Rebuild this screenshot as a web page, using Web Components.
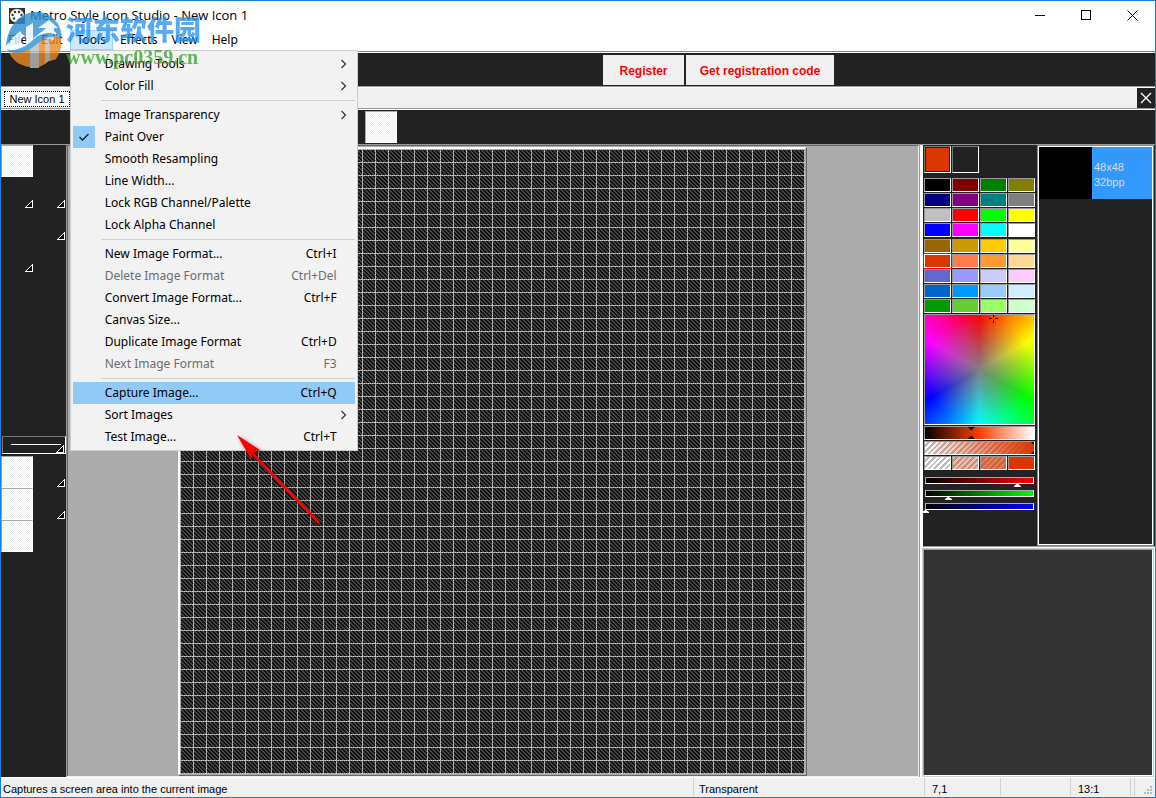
<!DOCTYPE html>
<html lang="en">
<head>
<meta charset="utf-8">
<title>Metro Style Icon Studio - New Icon 1</title>
<style>
html, body { height: 100%; margin: 0; }
body { font-family: "Liberation Sans", Arial, sans-serif; font-size: 11px; }
</style>
</head>
<body>
<studio-window></studio-window>
<script>
const define = (name, html) => customElements.define(name, class extends HTMLElement {
  connectedCallback() {
    if (this.shadowRoot) return;
    const root = this.attachShadow({ mode: 'open' });
    root.innerHTML = typeof html === 'function' ? html(this) : html;
  }
});

const UI = '"Open Sans", "Noto Sans CJK SC", sans-serif';
const MENU = '"Noto Sans", "Noto Sans CJK SC", sans-serif';

/* Title bar */
define('title-bar', `
<style>
:host { display: flex; align-items: center; height: 29px; padding: 0 0 0 8px; font: 13px/29px ${UI}; color: #000; }
svg { display: block; }
h1 { flex: 1; margin: 0 0 0 5px; font: inherit; white-space: nowrap; }
button { width: 46px; height: 29px; padding: 0; border: 0; background: none; display: grid; place-items: center; }
</style>
<svg width="16" height="16" viewBox="0 0 16 16" aria-hidden="true">
  <rect width="16" height="16" fill="#333"/>
  <path d="M8 1C4 1 1 4 1 8s3 6 6 6c2 0 1-2 2-3s5 0 6-3c0-4-3-7-7-7z" fill="#fff"/>
  <g fill="#333"><circle cx="6" cy="4" r="1.2"/><circle cx="10" cy="4" r="1.2"/><circle cx="3.500" cy="7" r="1.2"/><circle cx="12.500" cy="7" r="1.2"/><circle cx="5" cy="10.500" r="1.200"/></g>
</svg>
<h1><slot></slot></h1>
<button aria-label="Minimize"><svg width="11" height="11" shape-rendering="crispEdges"><path d="M0 5.500h10" stroke="#000"/></svg></button>
<button aria-label="Maximize"><svg width="11" height="11" shape-rendering="crispEdges"><path d="M.5.5h9v9h-9z" fill="none" stroke="#000"/></svg></button>
<button aria-label="Close"><svg width="11" height="11"><path d="M.5.5l10 10M10.500.5l-10 10" stroke="#000"/></svg></button>`);

/* Tools drop-down entries */
define('menu-entry', el => `
<style>
:host { display: block; }
button { display: flex; align-items: center; width: 100%; height: 22px; padding: 0 18px 0 0; border: 0; background: none; font: 12px/22px ${MENU}; color: #000; text-align: left; white-space: nowrap; }
button:disabled { color: #6d6d6d; }
:host([current]) button { background: #91c9f7; }
.mark { width: 22px; height: 22px; margin-right: 10px; }
:host([checked]) .mark { background: #91c9f7; }
.label { flex: 1; }
.chevron { margin-right: -12px; }
svg { display: block; }
</style>
<button role="menuitem" ${el.hasAttribute('disabled') ? 'disabled' : ''}>
  <span class="mark">${el.hasAttribute('checked') ? '<svg width="22" height="22"><path d="M6.500 11l3 3 6-6" fill="none" stroke="#222" stroke-width="1.4"/></svg>' : ''}</span>
  <span class="label"><slot></slot></span>
  ${el.getAttribute('shortcut') ? `<span>${el.getAttribute('shortcut')}</span>` : ''}
  ${el.hasAttribute('submenu') ? '<svg class="chevron" width="8" height="10"><path d="M.5 1l4 4-4 4" fill="none" stroke="#333" stroke-width="1.2"/></svg>' : ''}
</button>`);

define('tools-menu', `
<style>
:host { display: block; box-sizing: border-box; width: 288px; padding: 2px; border: 1px solid #ccc; background: #f2f2f2; }
hr { margin: 3px 0 3px 28px; border: 0; border-top: 1px solid #d0d0d0; }
</style>
<div role="menu" aria-label="Tools">
<menu-entry submenu>Drawing Tools</menu-entry>
<menu-entry submenu>Color Fill</menu-entry>
<hr>
<menu-entry submenu>Image Transparency</menu-entry>
<menu-entry checked>Paint Over</menu-entry>
<menu-entry>Smooth Resampling</menu-entry>
<menu-entry>Line Width...</menu-entry>
<menu-entry>Lock RGB Channel/Palette</menu-entry>
<menu-entry>Lock Alpha Channel</menu-entry>
<hr>
<menu-entry shortcut="Ctrl+I">New Image Format...</menu-entry>
<menu-entry shortcut="Ctrl+Del" disabled>Delete Image Format</menu-entry>
<menu-entry shortcut="Ctrl+F">Convert Image Format...</menu-entry>
<menu-entry>Canvas Size...</menu-entry>
<menu-entry shortcut="Ctrl+D">Duplicate Image Format</menu-entry>
<menu-entry shortcut="F3" disabled>Next Image Format</menu-entry>
<hr>
<menu-entry shortcut="Ctrl+Q" current>Capture Image...</menu-entry>
<menu-entry submenu>Sort Images</menu-entry>
<menu-entry shortcut="Ctrl+T">Test Image...</menu-entry>
</div>`);

define('menu-bar', `
<style>
:host { display: block; }
nav { display: flex; height: 21px; }
button { box-sizing: border-box; height: 20px; padding: 0 6px; border: 1px solid transparent; background: none; font: 12px/18px ${MENU}; color: #000; }
.open { position: relative; }
.open button { background: #cce8ff; border-color: #99d1ff; }
tools-menu { position: absolute; left: 0; top: 20px; z-index: 5; }
</style>
<nav aria-label="Main menu">
<button>File</button><button>Edit</button>
<div class="open"><button aria-expanded="true">Tools</button><tools-menu></tools-menu></div>
<button>Effects</button><button>View</button><button>Help</button>
</nav>`);

/* Registration and tab strips */
define('register-bar', `
<style>
:host { display: flex; gap: 2px; height: 32px; padding: 2px 0 0 602px; background: #222; border-top: 1px solid #888; box-shadow: inset 0 1px #fff; border-bottom: 1px solid #999; }
button { height: 30px; margin-top: 1px; border: 0; padding: 2px 0 0; background: #f0f0f0; color: #f00; font: bold 12px "Liberation Sans", Arial, sans-serif; white-space: nowrap; }
.reg { width: 81px; } .code { width: 148px; }
</style>
<button class="reg">Register</button><button class="code">Get registration code</button>`);

define('tab-strip', `
<style>
:host { display: flex; height: 20px; background: #f0f0f0; border-top: 1px solid #fff; border-bottom: 1px solid #999; }
.tab { box-sizing: border-box; height: 16px; margin: 3px 0 0 3px; padding: 0 4px; border: 1px dotted #000; background: #fff; font: 11px/14px "Liberation Sans", Arial, sans-serif; white-space: nowrap; width: 66px; }
.close { margin-left: auto; width: 18px; height: 20px; padding: 0; border: 0; background: #222; display: grid; place-items: center; }
</style>
<button class="tab" role="tab" aria-selected="true">New Icon 1</button>
<button class="close" aria-label="Close image"><svg width="12" height="12"><path d="M1 1l10 10M11 1L1 11" stroke="#fff" stroke-width="1.300"/></svg></button>`);

const CHECK = `background: repeating-conic-gradient(#f0f0f0 0 25%, #fff 0 50%) 0 0 / 2px 2px;`;

define('option-bar', `
<style>
:host { display: block; box-sizing: border-box; height: 36px; padding: 1px 0 0 364px; background: #222; border-top: 1px solid #fff; border-bottom: 1px solid #999; }
div { box-sizing: border-box; width: 32px; height: 32px; border: 1px solid; border-color: #aaa #fff #fff #aaa; ${CHECK} }
</style>
<div></div>`);

/* Left tool box */
define('tool-box', () => {
  const tri = '<svg width="8" height="8" shape-rendering="crispEdges"><path d="M1 7L7 1V7z" fill="#000" stroke="#fff"/></svg>';
  const cell = k => `<button aria-label="Tool" class="${k === 'f' ? 'fill' : ''}">${k === 't' ? tri : ''}</button>`;
  return `
<style>
:host { display: block; width: 65px; background: #222; }
.grid { display: grid; grid-template-columns: 32px 32px; grid-auto-rows: 32px; }
button { display: flex; align-items: flex-end; justify-content: flex-end; padding: 0 0 1px; border: 0; background: none; }
button.fill { border: 1px solid; border-color: #aaa #fff #fff #999; ${CHECK} }
.width { box-sizing: border-box; width: 64px; height: 18px; margin: 163px 0 2px 1px; padding: 0 1px 0 6px; border: 1px solid; border-color: #777 #fff #fff #777; }
.width i { width: 50px; height: 1px; margin: 0 -5px 8px 0; background: #fff; }
</style>
<div class="grid">${['f','','t','t','','t','t',''].map(cell).join('')}</div>
<button class="width" aria-label="Line width"><i></i>${tri}</button>
<div class="grid">${['f','t','f','t','f',''].map(cell).join('')}</div>`;
});

/* Drawing stage with pixel grid */
define('pixel-canvas', `
<style>
:host { flex: 1; display: flex; justify-content: center; align-items: flex-start; min-width: 0; overflow: hidden; background: #ababab; border: 1px solid; border-color: #666 #eee #eee #999; box-shadow: inset 1px 0 #666; padding: 1px 1px 0 0; }
svg { display: block; flex: none; border-left: 2px solid #fff; border-top: 2px solid #fff; border-right: 1px solid #aaa; border-bottom: 1px solid #aaa; box-shadow: 1px 1px #666; }
</style>
<svg width="625" height="625" shape-rendering="crispEdges" role="img" aria-label="Icon canvas, 48 by 48 pixels">
<defs>
<pattern id="hatch" width="4" height="4" patternUnits="userSpaceOnUse"><rect width="4" height="4" fill="#111"/><path d="M0 0h2v1h-2zM1 1h2v1h-2zM2 2h2v1h-2zM3 3h1v1h-1zM0 3h1v1h-1z" fill="#444"/></pattern>
<pattern id="cells" width="13" height="13" patternUnits="userSpaceOnUse"><path d="M0 .5H13M.5 0V13" stroke="#909090"/><path d="M0 .5H13M.5 0V13" stroke="#ccc" stroke-dasharray="1 1"/></pattern>
</defs>
<rect width="625" height="625" fill="url(#hatch)"/><rect width="625" height="625" fill="url(#cells)"/>
</svg>`);

/* Colour tools */
define('colour-slider', el => `
<style>
:host { display: grid; height: 13px; }
.track, input { grid-area: 1 / 1; }
.track { box-sizing: border-box; height: 7px; border: 1px solid; border-color: #aaa #fff #fff #aaa; background: linear-gradient(90deg, #000, ${el.getAttribute('to')}); }
input { appearance: none; width: calc(100% + 6px); height: 10px; margin: 0 -3px; background: none; }
input::-webkit-slider-thumb { appearance: none; width: 7px; height: 3px; margin-top: 7px; background: #fff; clip-path: polygon(43% 0, 57% 0, 100% 67%, 100% 100%, 0 100%, 0 67%); }
</style>
<div class="track"></div>
<input type="range" min="0" max="255" value="${el.getAttribute('value')}" aria-label="${el.getAttribute('name')}">`);

define('colour-panel', () => {
  const system = ['#000','#800000','#008000','#808000','#000080','#800080','#008080','#808080','#c0c0c0','#f00','#0f0','#ff0','#00f','#f0f','#0ff','#fff'];
  const metro = ['#960','#c90','#fc0','#ff9','#d93600','#ff7a4d','#f93','#ffd999','#66c','#99f','#ccf','#fcf','#06c','#09f','#9cf','#cfeeff','#090','#6c3','#9f6','#cfc'];
  const sw = c => `<button class="${c === '#d93600' ? 'on' : ''}" style="--c:${c}" aria-label="Colour ${c}"></button>`;
  const hatch = 'repeating-linear-gradient(135deg, #fff 0 2px, #bbb 2px 4px)';
  return `
<style>
:host { display: block; box-sizing: border-box; width: 114px; padding: 1px 2px 0 1px; background: #222; }
button { box-sizing: border-box; padding: 0; border: 1px solid; border-color: #999 #fff #fff #999; background: var(--c); }
.current { display: grid; grid-template-columns: 27px 27px; gap: 1px; height: 27px; margin-bottom: 5px; }
.current button { border-color: #777 #fff #fff #777; box-shadow: inset 0 0 0 1px #222; }
.swatches { display: grid; grid-template-columns: repeat(4, 27px); grid-auto-rows: 14px; gap: 1px; margin-bottom: 2px; }
.metro { margin-bottom: 1px; }
.on { border-color: #fff; outline: 1px solid #f00; }
.wheel { height: 109px; border: 1px solid; border-color: #999 #fff #fff #999;
  background: radial-gradient(circle closest-side, #808080, #80808000 100%), conic-gradient(red, yellow, lime, cyan, blue, magenta, red); }
.wheel svg { display: block; margin-left: 64px; }
.bar { display: grid; height: 12px; margin-top: 1px; border: 1px solid; border-color: #999 #fff #fff #999; }
.bar input { appearance: none; width: 100%; height: 12px; margin: 0; background: none; }
.bar input::-webkit-slider-thumb { appearance: none; width: 7px; height: 12px; background: #000; clip-path: polygon(0 0, 100% 0, 50% 30%, 50% 70%, 100% 100%, 0 100%, 50% 70%, 50% 30%); }
.value { background: linear-gradient(90deg, #000, #ff3f00 50%, #fff); }
.alpha { background: linear-gradient(90deg, #d9360000, #d93600), ${hatch}; overflow: hidden; }
.alpha input { width: calc(100% + 4px); }
.alphas { display: grid; grid-template-columns: repeat(4, 27px); gap: 1px; height: 14px; margin: 1px 0 7px; }
.alphas button { background: linear-gradient(var(--c), var(--c)), ${hatch}; }
.rgb { padding: 0 1px; }
</style>
<div class="current"><button style="--c:#d93600" aria-label="Foreground colour"></button><button style="--c:#222" aria-label="Background colour"></button></div>
<div class="swatches">${system.map(sw).join('')}</div>
<div class="swatches metro">${metro.map(sw).join('')}</div>
<div class="wheel"><svg width="9" height="9" shape-rendering="crispEdges"><path d="M0 3.500h3M6 3.500h3M4.500 0v2M4.500 5v3" stroke="#000"/></svg></div>
<div class="bar value"><input type="range" min="0" max="100" value="42" aria-label="Lightness"></div>
<div class="bar alpha"><input type="range" min="0" max="100" value="100" aria-label="Opacity"></div>
<div class="alphas"><button style="--c:#d9360000" aria-label="Opacity 0"></button><button style="--c:#d9360055" aria-label="Opacity 33"></button><button style="--c:#d93600aa" aria-label="Opacity 66"></button><button style="--c:#d93600" aria-label="Opacity 100"></button></div>
<div class="rgb"><colour-slider name="Red" to="#f00" value="217"></colour-slider><colour-slider name="Green" to="#0f0" value="54"></colour-slider><colour-slider name="Blue" to="#00f" value="0"></colour-slider></div>`;
});

define('format-list', `
<style>
:host { flex: 1; box-sizing: border-box; border: 1px solid #fff; outline: 1px solid #888; background: #222; margin: 1px 2px 1px 1px; }
button { display: flex; width: 100%; height: 52px; padding: 0; border: 0; background: #39f; color: #d8d8d8; font: 11px/15px "Liberation Sans", Arial, sans-serif; text-align: left; align-items: center; }
.thumb { width: 53px; height: 52px; background: #000; margin-right: 2px; }
.text { padding-top: 3px; }
</style>
<button><span class="thumb"></span><span class="text">48x48<br>32bpp</span></button>`);

define('side-panel', `
<style>
:host { display: flex; flex-direction: column; width: 236px; background: #fff; border-left: 1px solid #999; box-sizing: border-box; padding-left: 3px; }
.top { display: flex; height: 402px; background: #222; border-bottom: 1px solid #999; box-sizing: border-box; }
.preview { flex: 1; margin: 2px 2px 1px 0; border: 1px solid; border-color: #999 #fff #fff #999; background: #333; outline: 1px solid #ccc; }
</style>
<div class="top"><colour-panel></colour-panel><format-list></format-list></div>
<div class="preview"></div>`);

define('status-bar', `
<style>
:host { display: flex; height: 19px; background: #f0f0f0; font: 11px/22px "Liberation Sans", Arial, sans-serif; color: #000; white-space: nowrap; border-top: 1px solid #fff; }
span { box-sizing: border-box; height: 18px; padding-left: 7px; border-left: 1px solid #d0d0d0; }
.hint { flex: 1; padding-left: 2px; border: 0; }
.mode { width: 231px; padding-left: 5px; } .pos { width: 76px; } .size { width: 70px; } .zoom { width: 60px; } .gap { width: 4px; padding: 0; }
.grip { width: 21px; display: flex; align-items: flex-end; justify-content: flex-end; padding: 0 2px 1px 0; }
</style>
<span class="hint">Captures a screen area into the current image</span>
<span class="mode">Transparent</span><span class="pos">7,1</span><span class="size"></span><span class="zoom">13:1</span><span class="gap"></span>
<span class="grip"><svg width="9" height="9" shape-rendering="crispEdges"><path d="M6 0h2v2h-2zM3 3h2v2h-2zM6 3h2v2h-2zM0 6h2v2h-2zM3 6h2v2h-2zM6 6h2v2h-2z" fill="#b8b8b8"/></svg></span>`);

/* Site badge */
define('site-badge', `
<style>
:host { position: absolute; left: 4px; top: 10px; display: flex; z-index: 8; pointer-events: none; }
svg { display: block; flex: none; opacity: .8; }
div { display: flex; flex-direction: column; margin-left: 3px; opacity: .78; white-space: nowrap; }
b { font: 900 27px/36px "Noto Sans CJK SC", sans-serif; color: #2793ee; }
em { font: bold 20px/20px "Liberation Serif", serif; color: #3aa52e; }
</style>
<svg width="58" height="58" viewBox="0 0 58 58" aria-hidden="true">
<path d="M1 35C3 10 20 0 33 1c15 1 24 13 24 27L44 15 25 30 16 22C9 27 4 31 1 35z" fill="#2f8fd0"/>
<path d="M4 40c6 2 15 0 22-5 9-7 16-13 29-9 3 8 0 17-5 23H38V26l-6 4v26h-8V38c-6 4-13 5-20 2z" fill="#f08a1e"/>
<path d="M4 41c8 2 15-1 21-5v20C15 55 7 49 4 41zM34 30l6-4v27l-6 3zM43 24c5 0 9 0 12 2 2 8-1 17-9 24h-3z" fill="#ee8a20"/>
<path d="M25 36l9-7v28h-9zM40 25l5-3v27l-5 4z" fill="#bcbcbc"/>
<path d="M2 36C5 28 11 23 16 20v13zM21 16l7-4v20l-7 4zM33 17l11-8 9 8h-4v12l-8-2V17z" fill="#e6f3fc"/>
<path d="M1 38c10 3 20-2 28-10 8-7 17-8 27-2-10-2-17 1-24 7C22 42 9 45 1 38z" fill="#2f8fd0"/>
</svg>
<div><b lang="zh">河东软件园</b><em>www.pc0359.cn</em></div>`);

define('pointer-arrow', `
<style>
:host { position: absolute; left: 232px; top: 430px; z-index: 9; pointer-events: none; }
svg { display: block; filter: drop-shadow(2px 2px 2px #0008); }
</style>
<svg width="94" height="98" viewBox="0 0 94 98" aria-hidden="true"><path d="M86 92L20 23" stroke="#f00" stroke-width="2.600"/><path d="M4 4L27 19 20 22 18 28Z" fill="#f00"/></svg>`);

define('studio-window', `
<style>
:host { position: relative; display: flex; flex-direction: column; box-sizing: border-box; min-height: 100vh; border: 1px solid #1a7fd4; background: #fff; }
main { flex: 1; display: flex; min-height: 0; background: #fff; }
</style>
<title-bar>Metro Style Icon Studio - New Icon 1</title-bar>
<menu-bar></menu-bar>
<register-bar></register-bar>
<tab-strip></tab-strip>
<option-bar></option-bar>
<main><tool-box></tool-box><pixel-canvas></pixel-canvas><side-panel></side-panel></main>
<status-bar></status-bar>
<site-badge></site-badge>
<pointer-arrow></pointer-arrow>`);
</script>
</body>
</html>
